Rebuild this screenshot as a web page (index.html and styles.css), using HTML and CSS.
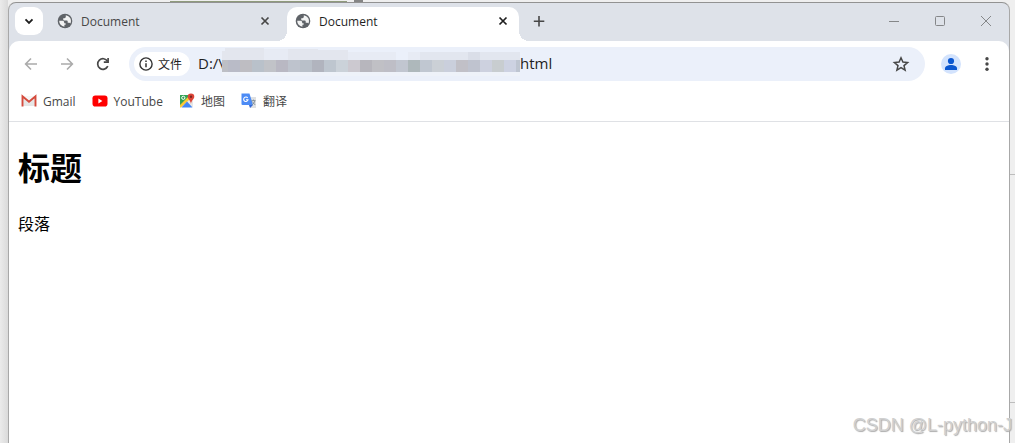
FILE: index.html
```html
<!DOCTYPE html>
<html lang="zh-CN">
<head>
<meta charset="utf-8">
<title>Document</title>
<link rel="stylesheet" href="styles.css">
</head>
<body>
<svg class="defs" aria-hidden="true">
  <symbol id="globe" viewBox="0 0 16 16">
    <circle cx="8" cy="8" r="7.3" fill="#5f6368"/>
    <path d="M8.800 2.200v1.600c0 .8-.6 1.400-1.400 1.400H6.200v1.400c0 .5.300.8.800.8h2.500c.8 0 1.200.5 1.200 1.200v1.200h1.600c.5 0 .9.200 1.100.6A5.800 5.800 0 0 0 8.800 2.200zM2.200 7.800h3.300c1 0 1.700.7 1.700 1.600v.8h1.400v1.500H7.400v2.100A5.900 5.900 0 0 1 2.200 7.800z" fill="#fff" opacity=".92"/>
  </symbol>
  <symbol id="close" viewBox="0 0 16 16"><path d="M4.500 4.500l7 7m0-7l-7 7" fill="none" stroke="currentColor" stroke-width="1.700"/></symbol>
</svg>
<div class="window">
  <header class="tabstrip">
    <button class="tab-search" aria-label="搜索标签页"><svg width="16" height="16" viewBox="0 0 16 16"><path d="M4.500 6.300L8 9.800l3.500-3.500" fill="none" stroke="#1f1f1f" stroke-width="1.900"/></svg></button>
    <div class="tab">
      <svg class="favicon"><use href="#globe"/></svg>
      <span class="tab-title">Document</span>
      <button class="tab-close" aria-label="关闭"><svg><use href="#close"/></svg></button>
    </div>
    <div class="tab active">
      <svg class="favicon"><use href="#globe"/></svg>
      <span class="tab-title">Document</span>
      <button class="tab-close" aria-label="关闭"><svg><use href="#close"/></svg></button>
    </div>
    <button class="new-tab" aria-label="新标签页"><svg width="16" height="16" viewBox="0 0 16 16"><path d="M8 3v10.500M2.800 8.200h10.500" fill="none" stroke="#474747" stroke-width="1.600"/></svg></button>
    <div class="controls">
      <button aria-label="最小化"><svg width="12" height="12" viewBox="0 0 12 12"><path d="M1 6.500h10"/></svg></button>
      <button aria-label="最大化"><svg width="12" height="12" viewBox="0 0 12 12"><rect x="1.500" y="1.500" width="9" height="9" rx="1"/></svg></button>
      <button aria-label="关闭窗口"><svg width="12" height="12" viewBox="0 0 12 12"><path d="M1 1l10 10M11 1L1 11"/></svg></button>
    </div>
  </header>
  <div class="chrome">
    <div class="toolbar">
      <button class="nav" aria-label="后退"><svg width="16" height="16" viewBox="0 0 16 16"><path d="M14 8H3M8 2.500L2.600 8 8 13.500" fill="none" stroke="#ababab" stroke-width="1.600"/></svg></button>
      <button class="nav" aria-label="前进"><svg width="16" height="16" viewBox="0 0 16 16"><path d="M2 8h11M8 2.500L13.400 8 8 13.500" fill="none" stroke="#ababab" stroke-width="1.600"/></svg></button>
      <button class="nav" aria-label="刷新"><svg width="16" height="16" viewBox="0 0 16 16"><path d="M12.800 10.200A5.300 5.300 0 1 1 12.500 5.200" fill="none" stroke="#474747" stroke-width="1.700"/><path d="M8.800 6.200h4.300V2" fill="none" stroke="#474747" stroke-width="1.700"/></svg></button>
      <div class="omnibox">
        <button class="chip"><svg width="16" height="16" viewBox="0 0 16 16"><circle cx="8" cy="8" r="6.100" fill="none" stroke="#333" stroke-width="1.400"/><path d="M8 7.200v4M8 4.600v1.500" stroke="#333" stroke-width="1.500"/></svg>文件</button>
        <input class="url" type="text" aria-label="地址" value="D:/\">
        <svg class="mosaic" width="298" height="34" viewBox="0 0 298 34" shape-rendering="crispEdges" aria-hidden="true">
          <path d="M3 1h39v12H0V4h3zM66 2h30v11H66zM96 3h30v10H96z" fill="#e3e6ee"/>
          <path d="M42 2h24v11H42zM126 5h48v8h-48zM186 5h12v8h-12z" fill="#e7ebf4"/>
          <path d="M198 5h100v8H198z" fill="#e2e6ef"/>
          <path d="M246 5h12v8h-12z" fill="#dadee8"/>
          <path d="M0 25h298v4H0z" fill="#eef2f9"/>
          <path d="M0 13h6v12H0z" fill="#bdbfc5"/><path d="M6 13h12v12H6z" fill="#b9bbc7"/>
          <path d="M18 13h12v12H18z" fill="#bebdc2"/><path d="M30 13h12v12H30z" fill="#b9c1ca"/>
          <path d="M42 13h12v12H42z" fill="#c1c3c8"/><path d="M54 13h12v12H54z" fill="#b9b8c3"/>
          <path d="M66 13h12v12H66z" fill="#bec3cd"/><path d="M78 13h12v12H78z" fill="#b9c0c9"/>
          <path d="M90 13h12v12H90z" fill="#b1b4be"/><path d="M102 13h12v12h-12z" fill="#bec6cf"/>
          <path d="M114 13h12v12h-12z" fill="#cbd2d9"/><path d="M126 13h12v12h-12z" fill="#ccc9d0"/>
          <path d="M138 13h12v12h-12z" fill="#b7b6bd"/><path d="M150 13h12v12h-12z" fill="#c0c0c5"/>
          <path d="M162 13h12v12h-12z" fill="#bebec6"/><path d="M174 13h12v12h-12z" fill="#c1c6d0"/>
          <path d="M186 13h12v12h-12z" fill="#aeb8bb"/><path d="M198 13h12v12h-12z" fill="#c0c7d1"/>
          <path d="M210 13h12v12h-12z" fill="#cbd0d6"/><path d="M222 13h12v12h-12z" fill="#cacfdc"/>
          <path d="M234 13h12v12h-12z" fill="#c1c0c7"/><path d="M246 13h12v12h-12z" fill="#bfc3cf"/>
          <path d="M258 13h12v12h-12z" fill="#cdd1df"/><path d="M270 13h12v12h-12z" fill="#c8cdd0"/>
          <path d="M282 13h12v12h-12z" fill="#cdd2e2"/><path d="M294 13h4v12h-4z" fill="#bec5d1"/>
        </svg>
        <span class="url-tail">html</span>
        <button class="star" aria-label="为此标签页添加书签"><svg width="18" height="18" viewBox="0 0 18 18"><path d="M9 2.800l1.900 4.300 4.700.4-3.600 3.100 1.100 4.600L9 12.700l-4.100 2.500L6 10.600 2.400 7.500l4.700-.4z" fill="none" stroke="#474747" stroke-width="1.500"/></svg></button>
      </div>
      <button class="avatar" aria-label="个人资料"><svg width="20" height="20" viewBox="0 0 20 20"><circle cx="10" cy="10" r="10" fill="#d3e3fd"/><circle cx="10" cy="7" r="3.100" fill="#0b57d0"/><path d="M4 16v-1.700c0-2 3-3.300 6-3.300s6 1.300 6 3.300V16z" fill="#0b57d0"/></svg></button>
      <button class="more" aria-label="更多"><svg width="16" height="16" viewBox="0 0 16 16" fill="#474747"><circle cx="8" cy="2.700" r="1.700"/><circle cx="8" cy="8" r="1.700"/><circle cx="8" cy="13.300" r="1.700"/></svg></button>
    </div>
    <nav class="bookmarks">
      <a href="#"><svg width="16" height="16" viewBox="0 0 16 16"><path d="M2 3h12v10H2z" fill="#e6e6e6"/><path d="M2 3h12L8 8.500z" fill="#f6f6f6"/><path d="M1.500 13.500V3.200L8 8.800l6.500-5.600v10.300" fill="none" stroke="#d54b3d" stroke-width="1.900"/></svg>Gmail</a>
      <a href="#"><svg width="16" height="16" viewBox="0 0 16 16"><rect x=".5" y="2.500" width="15" height="11" rx="2.800" fill="#f00"/><path d="M6.400 5.600v4.800l4-2.400z" fill="#fff"/></svg>YouTube</a>
      <a href="#"><svg width="16" height="16" viewBox="0 0 16 16"><path d="M1 2h11v12H1z" fill="#34a355"/><path d="M1 13.500L10.500 4l3.500 4v6H1z" fill="#e7e8e8"/><path d="M1 12l8-8 2 2-9 8.500H1z" fill="#fbc934"/><path d="M2.500 14.500L8 8.500l5.500 6z" fill="#4285f4"/><circle cx="4.300" cy="4.800" r="1.600" fill="none" stroke="#fff"/><path d="M12 .5a3.300 3.300 0 0 0-3.300 3.300C8.700 6.300 11.500 7 12 11c.5-4 3.300-4.700 3.300-7.200A3.300 3.300 0 0 0 12 .5z" fill="#dc4437"/><circle cx="12" cy="3.800" r="1.200" fill="#7d2720"/></svg>地图</a>
      <a href="#"><svg width="16" height="16" viewBox="0 0 16 16"><path d="M7 4h8v11H9z" fill="#dfe1e3"/><path d="M.5.500h8l3.500 11.500H1.500a1 1 0 0 1-1-1z" fill="#4c8bf5"/><path d="M8 12h4l-3 3z" fill="#3367d6"/><path d="M6.700 5A2.200 2.200 0 1 0 7 6.800H5" fill="none" stroke="#fff" stroke-width="1.100"/><path d="M10.500 7.600h4M12.500 6.600v1M13.800 7.800c-.3 2-1.500 3.300-3 4M11.200 8.500l3 3.500" fill="none" stroke="#77838c" stroke-width=".8"/></svg>翻译</a>
    </nav>
  </div>
  <main class="page">
    <h1>标题</h1>
    <p>段落</p>
  </main>
</div>
<div class="watermark">CSDN @L-python-J</div>
</body>
</html>
```
FILE: styles.css
```css
* { box-sizing: border-box; }

html, body { height: 100%; }

body {
  margin: 0;
  padding: 2px 5px 0 8px;
  overflow: hidden;
  font-family: "Open Sans", "Noto Sans CJK SC", sans-serif;
  background:
    linear-gradient(#8f9b7c, #8f9b7c) 170px 1px / 177px 1px no-repeat,
    linear-gradient(#858585, #858585) 354px 0 / 9px 2px no-repeat,
    linear-gradient(#bdbdbd, #bdbdbd) right 174px / 5px 1px no-repeat,
    linear-gradient(#bdbdbd, #bdbdbd) right 402px / 5px 1px no-repeat,
    linear-gradient(to right, #ebebeb, #dadada) 0 0 / 8px 100% no-repeat,
    #efefef;
}

.defs { position: absolute; width: 0; height: 0; }

button {
  display: flex;
  align-items: center;
  justify-content: center;
  padding: 0;
  border: 0;
  background: none;
  color: inherit;
  font: inherit;
}

svg { display: block; flex: none; }

.window {
  display: flex;
  flex-direction: column;
  height: 100%;
  border: 1px solid #a8a8a8;
  border-top-color: #929292;
  border-bottom: 0;
  border-radius: 8px 8px 0 0;
  background: #dee2e9;
  overflow: hidden;
}

.tabstrip {
  display: flex;
  height: 38px;
  padding: 4px 0 0 6px;
}

.tab-search {
  width: 28px;
  height: 28px;
  margin-right: 6px;
  border-radius: 9px;
  background: #fff;
}

.tab {
  position: relative;
  display: flex;
  align-items: center;
  flex: 0 1 232px;
  height: 34px;
  margin-right: 6px;
  padding: 0 8px 6px;
  color: #474747;
  font-size: 12px;
}

.tab.active {
  margin-right: 0;
  background: #fff;
  border-radius: 10px 10px 0 0;
  color: #1f1f1f;
}

.tab.active::before,
.tab.active::after {
  content: "";
  position: absolute;
  bottom: 0;
  width: 10px;
  height: 10px;
}

.tab.active::before {
  left: -10px;
  background: radial-gradient(circle at 0 0, transparent 10px, #fff 10px);
}

.tab.active::after {
  right: -10px;
  background: radial-gradient(circle at 100% 0, transparent 10px, #fff 10px);
}

.favicon { width: 16px; height: 16px; }
.tab-title { flex: 1; margin-left: 8px; }
.tab-close, .tab-close svg { width: 16px; height: 16px; }

.new-tab { width: 28px; height: 28px; margin-left: 6px; }

.controls { display: flex; margin-left: auto; }
.controls button { width: 46px; height: 28px; }
.controls svg { fill: none; stroke: #858789; stroke-width: 1; }

.chrome {
  border-bottom: 1px solid #dfe1e5;
  border-radius: 10px 10px 0 0;
  background: #fff;
}

.toolbar {
  display: flex;
  align-items: center;
  height: 46px;
  padding: 0 8px 0 4px;
}

.nav { width: 36px; height: 34px; }

.omnibox {
  display: flex;
  align-items: center;
  flex: 1;
  height: 34px;
  margin: 0 12px 0 8px;
  padding: 0 12px 0 5px;
  border-radius: 17px;
  background: #ebf0fa;
  color: #1f1f1f;
  font-size: 15px;
}

.chip {
  justify-content: flex-start;
  gap: 4px;
  width: 56px;
  height: 24px;
  padding-left: 4px;
  border-radius: 12px;
  background: #fff;
  font-size: 12px;
}

.url {
  width: 24px;
  margin: 0 0 0 8px;
  padding: 0 0 2px;
  border: 0;
  outline: 0;
  background: none;
  color: inherit;
  font: inherit;
}

.url-tail { padding-bottom: 2px; }

.star { width: 24px; height: 24px; margin-left: auto; }
.avatar { width: 28px; height: 28px; }
.more { width: 28px; height: 28px; margin-left: 8px; }

.bookmarks {
  display: flex;
  align-items: center;
  gap: 16px;
  height: 34px;
  padding: 0 12px 6px;
}

.bookmarks a {
  display: flex;
  align-items: center;
  gap: 6px;
  color: #474747;
  font-size: 12px;
  text-decoration: none;
}

.page {
  flex: 1;
  padding: 20px 9px;
  background: #fff;
  color: #000;
  font-family: "Noto Sans CJK SC", sans-serif;
}

.page h1 { margin: 0; font-size: 32px; line-height: 48px; }
.page p { margin: 21px 0 0; font-size: 16px; line-height: 24px; }

.watermark {
  position: absolute;
  right: 3px;
  bottom: 6px;
  color: #d0d0d0;
  font: 18px/24px "Liberation Sans", Arial, sans-serif;
  text-shadow: 1px 1px 1px #aaa;
}
```
